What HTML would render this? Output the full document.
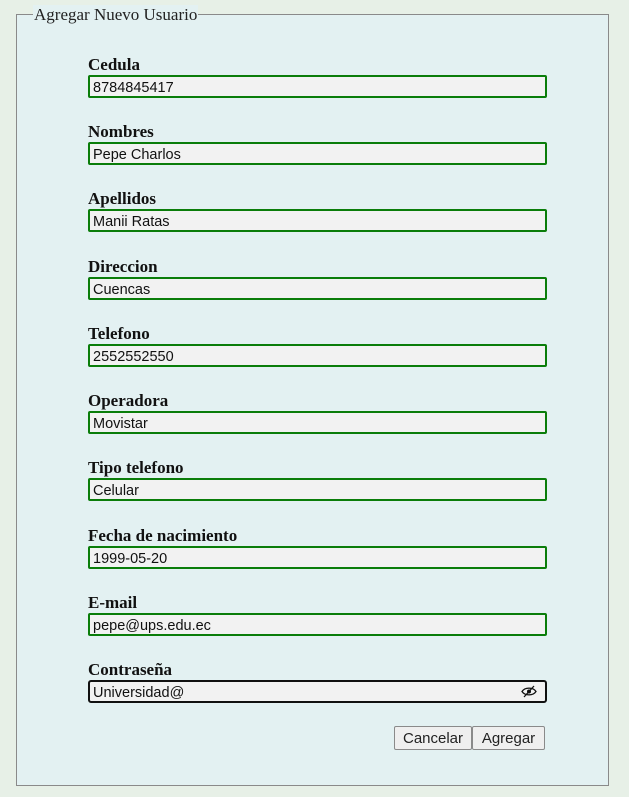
<!DOCTYPE html>
<html><head><style>
body{margin:0;width:629px;height:797px;background:#e7f0e7;position:relative;overflow:hidden;font-family:"Liberation Serif",serif}
.fs{position:absolute;left:16px;top:14px;width:591px;height:770px;border:1px solid #8a8a8a;background:#e3f1f2}
.lg{position:absolute;left:33px;top:5px;background:#e3f1f2;padding:0 1px;font-size:17px;color:#222;line-height:19px}
.lb{position:absolute;left:88px;font-weight:bold;font-size:17px;color:#111;line-height:18px}
.in{position:absolute;left:88px;width:452px;height:19px;border:2px solid #0a7d0a;border-radius:2px;background:#f2f2f2;font:14.5px "Liberation Sans",sans-serif;line-height:22px;padding-left:3px;box-sizing:content-box;color:#111}
.btn{position:absolute;top:726px;height:22px;border:1px solid #8a8a8a;border-radius:2px;background:#efefef;font:15px "Liberation Sans",sans-serif;line-height:23px;text-align:center;color:#222}
</style></head><body>
<div class="fs"></div>
<div class="lg">Agregar Nuevo Usuario</div>
<div class="lb" style="top:56px">Cedula</div><div class="in" style="top:75px">8784845417</div>
<div class="lb" style="top:123px">Nombres</div><div class="in" style="top:142px">Pepe Charlos</div>
<div class="lb" style="top:190px">Apellidos</div><div class="in" style="top:209px">Manii Ratas</div>
<div class="lb" style="top:258px">Direccion</div><div class="in" style="top:277px">Cuencas</div>
<div class="lb" style="top:325px">Telefono</div><div class="in" style="top:344px">2552552550</div>
<div class="lb" style="top:392px">Operadora</div><div class="in" style="top:411px">Movistar</div>
<div class="lb" style="top:459px">Tipo telefono</div><div class="in" style="top:478px">Celular</div>
<div class="lb" style="top:527px">Fecha de nacimiento</div><div class="in" style="top:546px">1999-05-20</div>
<div class="lb" style="top:594px">E-mail</div><div class="in" style="top:613px">pepe@ups.edu.ec</div>
<div class="lb" style="top:661px">Contraseña</div><div class="in" style="top:680px;border-color:#111;border-radius:3px">Universidad@
<svg style="position:absolute;right:8px;top:3px" width="16" height="13" viewBox="0 0 16 13"><path d="M1 6.5C4 2 12 2 15 6.5C12 11 4 11 1 6.5Z" fill="none" stroke="#111" stroke-width="1.3"/><circle cx="8" cy="6.5" r="2" fill="#111"/><path d="M3 12L13 1" stroke="#111" stroke-width="1.3"/></svg></div>
<div class="btn" style="left:394px;width:76px">Cancelar</div>
<div class="btn" style="left:472px;width:71px">Agregar</div>
</body></html>
